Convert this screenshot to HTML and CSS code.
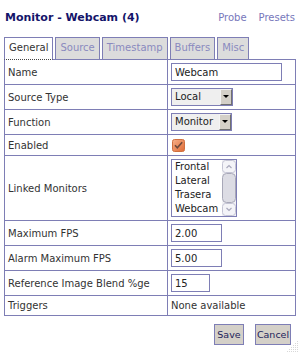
FILE: index.html
```html
<!DOCTYPE html>
<html lang="en">
<head>
    <meta charset="utf-8" />
    <title>Monitor - Webcam</title>
    <link rel="stylesheet" href="styles.css">
</head>
<body>
    <div class="header">
        <h1 class="title">Monitor - Webcam (4)</h1>
        <div class="links">
            <a href="#">Probe</a>
            <a href="#">Presets</a>
        </div>
    </div>
    <ul class="tabs">
        <li class="tab active"><a href="#">General</a></li>
        <li class="tab"><a href="#">Source</a></li>
        <li class="tab"><a href="#">Timestamp</a></li>
        <li class="tab"><a href="#">Buffers</a></li>
        <li class="tab"><a href="#">Misc</a></li>
    </ul>
    <table class="settings">
        <tr>
            <td class="label">Name</td>
            <td><input type="text" class="text wide" value="Webcam"></td>
        </tr>
        <tr>
            <td class="label">Source Type</td>
            <td><span class="select w62"><span class="value">Local</span><span class="arrow"></span></span></td>
        </tr>
        <tr>
            <td class="label">Function</td>
            <td><span class="select w61"><span class="value">Monitor</span><span class="arrow"></span></span></td>
        </tr>
        <tr>
            <td class="label">Enabled</td>
            <td>
                <svg class="check" width="13" height="13" viewBox="0 0 13 13">
                    <defs>
                        <linearGradient id="cb" x1="0" y1="0" x2="1" y2="1">
                            <stop offset="0" stop-color="#f6b08a"/>
                            <stop offset="1" stop-color="#df6a34"/>
                        </linearGradient>
                    </defs>
                    <rect x="0.5" y="0.5" width="12" height="12" rx="2" fill="url(#cb)" stroke="#d0703f"/>
                    <path d="M3 6.2 L5.3 8.8 L10.2 3.2" fill="none" stroke="#6e4a3c" stroke-width="1.6"/>
                </svg>
            </td>
        </tr>
        <tr>
            <td class="label">Linked Monitors</td>
            <td>
                <div class="listbox">
                    <div class="options">
                        <div>Frontal</div>
                        <div>Lateral</div>
                        <div>Trasera</div>
                        <div>Webcam</div>
                    </div>
                    <svg class="scroll" width="14" height="56" viewBox="0 0 14 56">
                        <rect x="0" y="0" width="14" height="56" fill="#f3f3f6"/>
                        <rect x="0.5" y="0.5" width="13" height="12" rx="3" fill="#f4f4f8" stroke="#c4c4d4"/>
                        <path d="M4.5 8 L7 5.5 L9.5 8" fill="none" stroke="#a8a8bc" stroke-width="1.2"/>
                        <rect x="0.5" y="13.5" width="13" height="29" rx="4" fill="#dcdce4" stroke="#a8a8b8"/>
                        <rect x="0.5" y="43.5" width="13" height="12" rx="3" fill="#f4f4f8" stroke="#c4c4d4"/>
                        <path d="M4.5 48 L7 50.5 L9.5 48" fill="none" stroke="#a8a8bc" stroke-width="1.2"/>
                    </svg>
                </div>
            </td>
        </tr>
        <tr>
            <td class="label">Maximum FPS</td>
            <td><input type="text" class="text short" value="2.00"></td>
        </tr>
        <tr>
            <td class="label">Alarm Maximum FPS</td>
            <td><input type="text" class="text short" value="5.00"></td>
        </tr>
        <tr>
            <td class="label">Reference Image Blend %ge</td>
            <td><input type="text" class="text tiny" value="15"></td>
        </tr>
        <tr>
            <td class="label">Triggers</td>
            <td>None available</td>
        </tr>
    </table>
    <div class="buttons">
        <button type="submit" class="save">Save</button>
        <button type="button" class="cancel">Cancel</button>
    </div>
    <svg class="grip" width="12" height="12" viewBox="0 0 12 12">
        <g fill="#d8d8d8">
            <rect x="10" y="1" width="1" height="1"/>
            <rect x="8" y="3" width="1" height="1"/><rect x="10" y="3" width="1" height="1"/>
            <rect x="6" y="5" width="1" height="1"/><rect x="8" y="5" width="1" height="1"/><rect x="10" y="5" width="1" height="1"/>
            <rect x="4" y="7" width="1" height="1"/><rect x="6" y="7" width="1" height="1"/><rect x="8" y="7" width="1" height="1"/><rect x="10" y="7" width="1" height="1"/>
            <rect x="2" y="9" width="1" height="1"/><rect x="4" y="9" width="1" height="1"/><rect x="6" y="9" width="1" height="1"/><rect x="8" y="9" width="1" height="1"/><rect x="10" y="9" width="1" height="1"/>
            <rect x="0" y="11" width="1" height="1"/><rect x="2" y="11" width="1" height="1"/><rect x="4" y="11" width="1" height="1"/><rect x="6" y="11" width="1" height="1"/><rect x="8" y="11" width="1" height="1"/><rect x="10" y="11" width="1" height="1"/>
        </g>
    </svg>
</body>
</html>
```
FILE: styles.css
```css
html, body {
    margin: 0;
    height: 100%;
}

body {
    position: relative;
    box-sizing: border-box;
    padding: 0 3px 0 4px;
    background-color: #fff;
    color: #333;
    font-family: "DejaVu Sans", Verdana, sans-serif;
    font-size: 10px;
}

.header {
    display: flex;
    justify-content: space-between;
    align-items: baseline;
    padding-top: 11px;
    height: 26px;
}

.title {
    margin: 0 0 0 1px;
    font-size: 11px;
    line-height: 14px;
    font-weight: bold;
    color: #14146a;
}

.links {
    display: flex;
    gap: 12px;
    margin-right: 1px;
}

.links a {
    color: #7777bb;
    text-decoration: none;
}

.tabs {
    display: flex;
    gap: 2px;
    margin: 0;
    padding: 0;
    list-style: none;
    height: 22px;
}

.tab {
    box-sizing: border-box;
    height: 22px;
    padding: 0 4px;
    border: 1px solid #7e7eb5;
    border-bottom: none;
    background-color: #dcdcdc;
    line-height: 20px;
}

.tab a {
    color: #8a8abf;
    text-decoration: none;
}

.tab.active {
    position: relative;
    z-index: 1;
    height: 23px;
    margin-bottom: -1px;
    background-color: #fff;
    border-bottom: 1px dotted #444;
}

.tab.active a {
    color: #333;
}

.settings {
    width: 100%;
    border-spacing: 0;
    border-top: 1px solid #7e7eb5;
    border-left: 1px solid #7e7eb5;
}

.settings td {
    padding: 3px;
    border-right: 1px solid #7e7eb5;
    border-bottom: 1px solid #7e7eb5;
    line-height: 13px;
    vertical-align: middle;
}

.settings td.label {
    box-sizing: border-box;
    width: 163px;
    white-space: nowrap;
    overflow: hidden;
}

.text {
    display: block;
    box-sizing: border-box;
    height: 18px;
    margin: 0;
    padding: 0 3px;
    border: 1px solid #7e7eb5;
    font-family: inherit;
    font-size: 10px;
    color: #222;
    background: #fff;
}

.wide { width: 111px; }
.short { width: 51px; }
.tiny { width: 39px; }

.select {
    display: flex;
    box-sizing: border-box;
    height: 18px;
    border: 1px solid #7e7eb5;
    background-color: #efefef;
    color: #222;
}

.w62 { width: 62px; }
.w61 { width: 61px; }

.select .value {
    flex: 1;
    padding-left: 3px;
    line-height: 16px;
}

.select .arrow {
    position: relative;
    box-sizing: border-box;
    width: 12px;
    height: 16px;
    background-color: #d4d0c8;
    border-top: 1px solid #f4f4f4;
    border-left: 1px solid #f4f4f4;
    border-right: 1px solid #707070;
    border-bottom: 1px solid #707070;
}

.select .arrow::after {
    content: "";
    position: absolute;
    left: 2px;
    top: 5px;
    border-left: 3px solid transparent;
    border-right: 3px solid transparent;
    border-top: 3px solid #000;
}

.check {
    display: block;
    margin: 1px 0 0 1px;
}

.listbox {
    display: flex;
    box-sizing: border-box;
    width: 66px;
    height: 58px;
    border: 1px solid #7e7eb5;
    color: #222;
}

.options {
    flex: 1;
    padding-left: 3px;
    line-height: 14px;
}

.scroll {
    display: block;
}

.buttons {
    display: flex;
    justify-content: flex-end;
    gap: 11px;
    margin-top: 8px;
    margin-right: 5px;
}

.buttons button {
    box-sizing: border-box;
    height: 21px;
    padding: 0;
    border: 1px solid #7e7eb5;
    background-color: #d4d0c8;
    color: #22225a;
    font-family: inherit;
    font-size: 9.5px;
}

.save { width: 30px; }
.cancel { width: 36px; }

.grip {
    position: absolute;
    right: 0;
    bottom: 0;
}
```
